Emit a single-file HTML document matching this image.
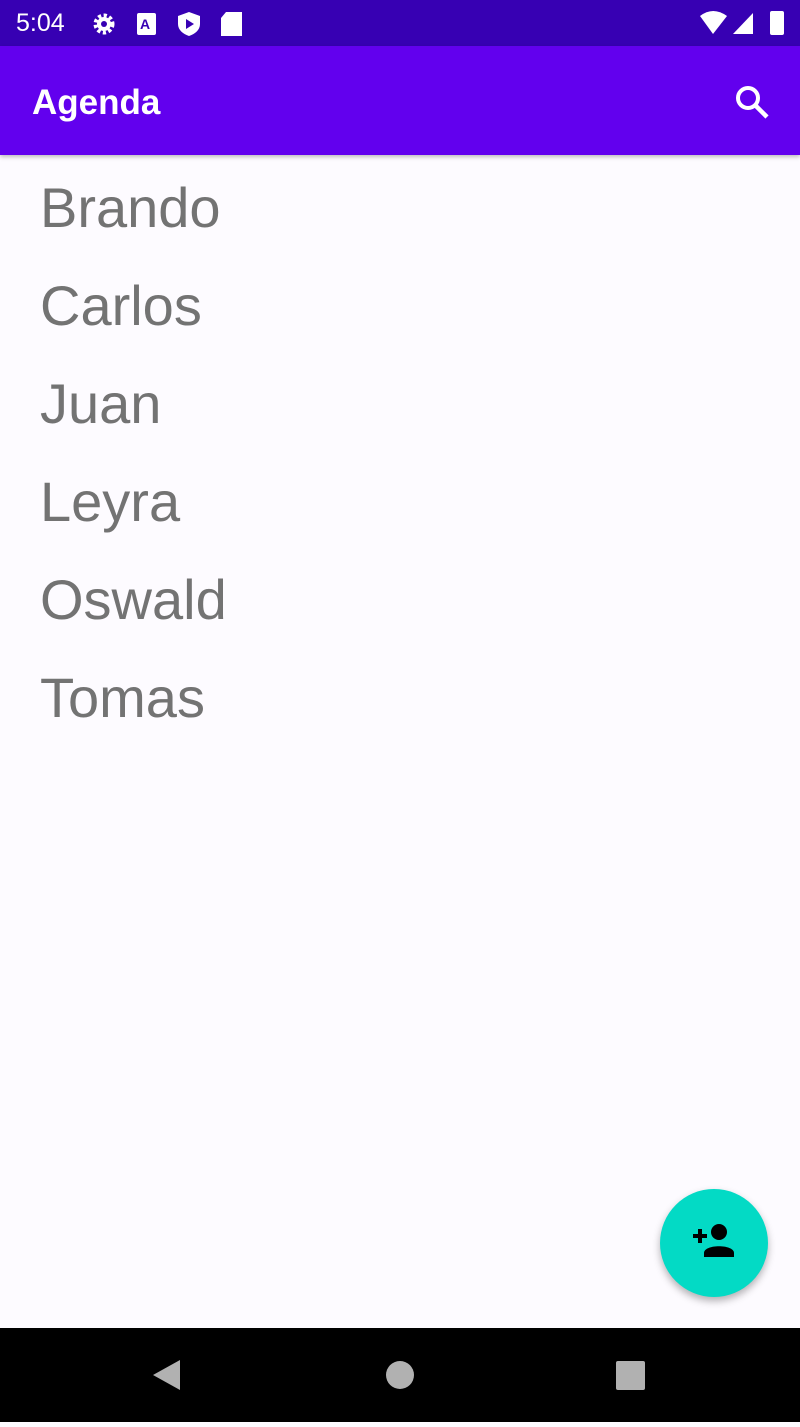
<!DOCTYPE html>
<html><head><style>
body{margin:0;width:800px;height:1422px;background:#fdfbff;font-family:"Liberation Sans",sans-serif;position:relative;overflow:hidden}
.sb{position:absolute;top:0;left:0;width:800px;height:46px;background:#3700b3;color:#fff}
.ab{position:absolute;top:46px;left:0;width:800px;height:109px;background:#6200ee;box-shadow:0 2px 4px rgba(0,0,0,.25)}
.name{position:absolute;left:40px;font-size:56px;color:#737373;line-height:1}
.nav{position:absolute;top:1328px;left:0;width:800px;height:94px;background:#000}
.fab{position:absolute;left:660px;top:1189px;width:108px;height:108px;border-radius:50%;background:#03dac5;box-shadow:0 4px 8px rgba(0,0,0,.3)}
</style></head><body>
<div class="sb">
<div style="position:absolute;left:16px;top:9px;font-size:25px">5:04</div>
<svg style="position:absolute;left:90px;top:10px" width="160" height="28" viewBox="0 0 160 28">
<circle cx="14" cy="14" r="8" fill="none" stroke="#fff" stroke-width="5" stroke-dasharray="3 2.3"/><circle cx="14" cy="14" r="7" fill="#fff"/><circle cx="14" cy="14" r="3" fill="#3700b3"/>
<rect x="47" y="3" width="19" height="22" rx="2" fill="#fff"/><text x="50" y="19" font-size="14" font-weight="bold" fill="#3700b3" font-family="Liberation Sans">A</text>
<path d="M99 2 L110 6 V14 C110 20 105 24 99 26 C93 24 88 20 88 14 V6 Z" fill="#fff"/><path d="M96 9 L104 14 L96 19Z" fill="#3700b3"/>
<path d="M136 2 H152 V26 H131 V8 Z" fill="#fff"/>
</svg>
<svg style="position:absolute;left:700px;top:8px" width="90" height="30" viewBox="0 0 90 30">
<path d="M0 8 Q13 -2 27 8 L13 26 Z" fill="#fff"/>
<path d="M33 26 L53 5 V26 Z" fill="#fff"/>
<rect x="70" y="3" width="14" height="24" rx="2" fill="#fff"/>
</svg>
</div>
<div class="ab">
<div style="position:absolute;left:32px;top:37px;font-size:35px;font-weight:bold;color:#fff">Agenda</div>
<svg style="position:absolute;left:734px;top:38px" width="36" height="36" viewBox="0 0 36 36"><circle cx="14" cy="14" r="10" fill="none" stroke="#fff" stroke-width="4"/><path d="M21 21 L33 33" stroke="#fff" stroke-width="4.5"/></svg>
</div>
<div class="name" style="top:180px">Brando</div>
<div class="name" style="top:278px">Carlos</div>
<div class="name" style="top:376px">Juan</div>
<div class="name" style="top:474px">Leyra</div>
<div class="name" style="top:572px">Oswald</div>
<div class="name" style="top:670px">Tomas</div>
<div class="fab"><svg style="position:absolute;left:32px;top:34px" width="46" height="40" viewBox="0 0 46 40"><path d="M8 6 V20 M1 13 H15" stroke="#000" stroke-width="4"/><circle cx="27" cy="9" r="8" fill="#000"/><path d="M12 30 C12 21 42 21 42 30 V34 H12Z" fill="#000"/></svg></div>
<div class="nav">
<svg width="800" height="94"><path d="M180 32 V62 L153 47Z" fill="#ddd" opacity=".8"/><circle cx="400" cy="47" r="14" fill="#ddd" opacity=".8"/><rect x="616" y="33" width="29" height="29" rx="2" fill="#ddd" opacity=".8"/></svg>
</div>
</body></html>
